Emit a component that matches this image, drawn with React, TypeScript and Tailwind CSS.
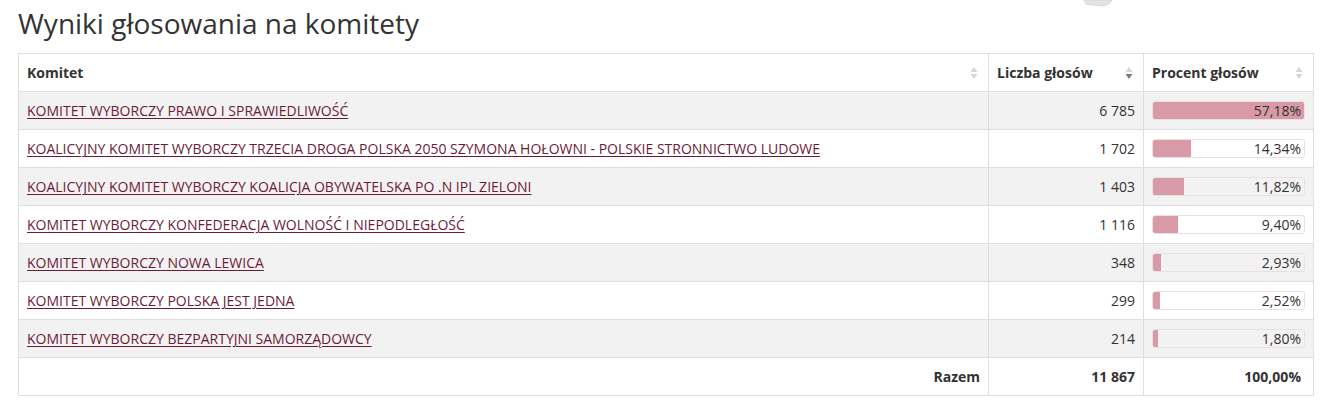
const rows = [
  { name: "KOMITET WYBORCZY PRAWO I SPRAWIEDLIWOŚĆ", votes: "6 785", pct: 57.18 },
  { name: "KOALICYJNY KOMITET WYBORCZY TRZECIA DROGA POLSKA 2050 SZYMONA HOŁOWNI - POLSKIE STRONNICTWO LUDOWE", votes: "1 702", pct: 14.34 },
  { name: "KOALICYJNY KOMITET WYBORCZY KOALICJA OBYWATELSKA PO .N IPL ZIELONI", votes: "1 403", pct: 11.82 },
  { name: "KOMITET WYBORCZY KONFEDERACJA WOLNOŚĆ I NIEPODLEGŁOŚĆ", votes: "1 116", pct: 9.4 },
  { name: "KOMITET WYBORCZY NOWA LEWICA", votes: "348", pct: 2.93 },
  { name: "KOMITET WYBORCZY POLSKA JEST JEDNA", votes: "299", pct: 2.52 },
  { name: "KOMITET WYBORCZY BEZPARTYJNI SAMORZĄDOWCY", votes: "214", pct: 1.8 },
]

function SortIcon({ active }: { active?: boolean }) {
  return (
    <svg width="8" height="14" viewBox="0 0 8 14" className="shrink-0">
      <path d="M4 1 L7.5 6 L0.5 6 Z" fill="#d6d6d6" />
      <path d="M4 13 L7.5 8 L0.5 8 Z" fill={active ? "#7a7a7a" : "#d6d6d6"} />
    </svg>
  )
}

const fmt = (n: number) => n.toFixed(2).replace(".", ",") + "%"

export default function App() {
  // the share bar is capped at the largest result, as on the source page
  const max = 57.18
  return (
    <div className="relative min-h-screen bg-white px-[18px] font-['Open_Sans',sans-serif] text-[#333]">
      <svg width="32" height="7" viewBox="0 0 32 7" className="absolute left-[1082px] top-0">
        <path d="M2 0 L30 0 L28 3 L22 6 L12 5 L4 4 Z" fill="#e4e4e4" stroke="#cfcfcf" strokeWidth="0.8" />
      </svg>
      <h1 className="pt-[3px] text-[28px] leading-[40px] font-normal text-[#333]">Wyniki głosowania na komitety</h1>
      <table className="mt-[10px] w-[1296px] border-collapse border border-[#dedede] text-[14px]">
        <thead>
          <tr className="h-[38px]">
            <th className="border border-[#dedede] px-[8px] text-left font-bold">
              <div className="flex items-center justify-between pr-[2px]">
                <span>Komitet</span>
                <SortIcon />
              </div>
            </th>
            <th className="w-[155px] border border-[#dedede] px-[8px] text-left font-bold">
              <div className="flex items-center justify-between pr-[2px]">
                <span>Liczba głosów</span>
                <SortIcon active />
              </div>
            </th>
            <th className="w-[170px] border border-[#dedede] px-[8px] text-left font-bold">
              <div className="flex items-center justify-between pr-[2px]">
                <span>Procent głosów</span>
                <SortIcon />
              </div>
            </th>
          </tr>
        </thead>
        <tbody>
          {rows.map((r, i) => (
            <tr key={r.name} className={i % 2 === 0 ? "h-[38px] bg-[#f2f2f2]" : "h-[38px] bg-white"}>
              <td className="border border-[#dedede] px-[8px]">
                <a href="#" className="text-[#6d1a37] underline underline-offset-[2px]">
                  {r.name}
                </a>
              </td>
              <td className="border border-[#dedede] px-[8px] text-right">{r.votes}</td>
              <td className="border border-[#dedede] px-[8px]">
                <div className="relative h-[19px] overflow-hidden rounded-[3px] border border-[#ecdfe2]">
                  <div
                    className="absolute inset-y-0 left-0 bg-[#d99aa8]"
                    style={{ width: `${(r.pct / max) * 100}%` }}
                  />
                  <div className="relative pr-[3px] text-right leading-[17px]">{fmt(r.pct)}</div>
                </div>
              </td>
            </tr>
          ))}
        </tbody>
        <tfoot>
          <tr className="h-[38px] font-bold">
            <td className="border border-[#dedede] px-[8px] text-right">Razem</td>
            <td className="border border-[#dedede] px-[8px] text-right">11 867</td>
            <td className="border border-[#dedede] px-[12px] text-right">100,00%</td>
          </tr>
        </tfoot>
      </table>
    </div>
  )
}
